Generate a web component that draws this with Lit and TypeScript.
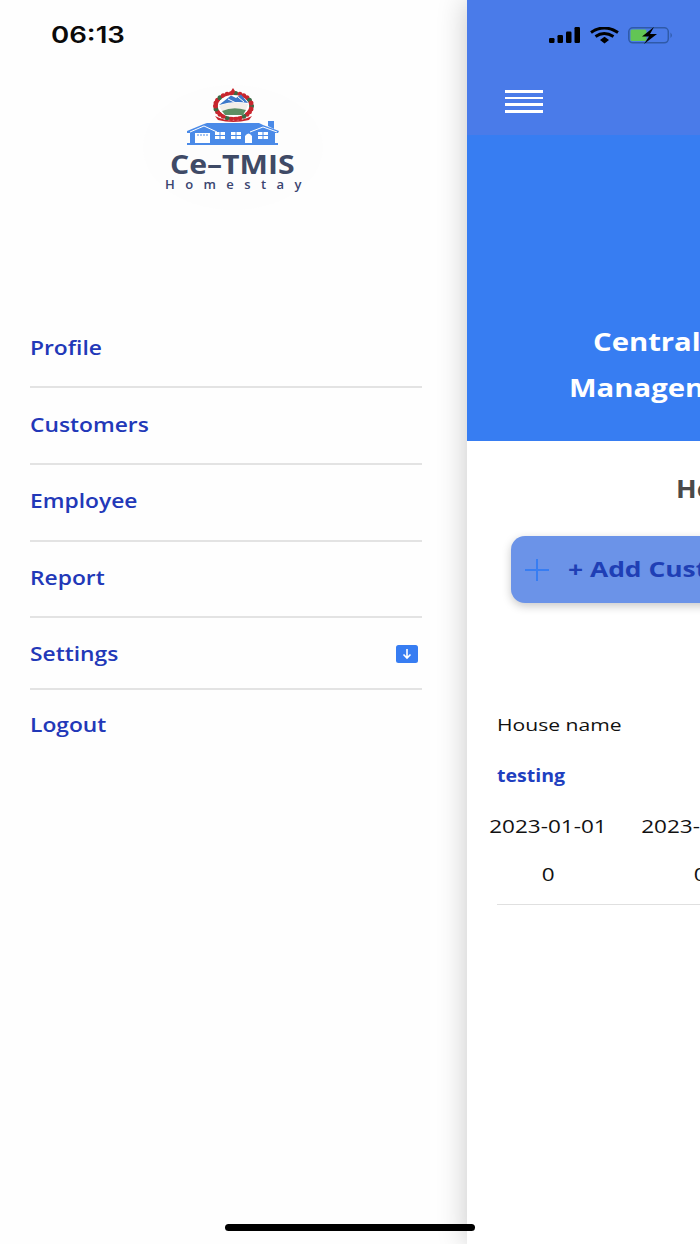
import { LitElement, html, css, svg } from "lit";
import { customElement } from "lit/decorators.js";

const dots = Array.from({ length: 26 }, (_, i) => {
  const a = (i / 26) * Math.PI * 2;
  return svg`<circle cx=${233.5 + Math.cos(a) * 18} cy=${106 + Math.sin(a) * 12.5} r="2.5" fill=${i % 4 === 0 ? "#3c6b45" : "#c8262e"} />`;
});

@customElement("app-root")
export class AppRoot extends LitElement {
  static styles = css`
    :host {
      display: block;
      position: relative;
      width: 700px;
      height: 1244px;
      overflow: hidden;
      font-family: "Open Sans", "Noto Sans", sans-serif;
      background: #fff;
    }
    .page { display: flex; height: 1244px; }
    .s { display: inline-block; transform-origin: left center; transform: scaleX(1.2); white-space: nowrap; }

    .drawer { width: 467px; flex: none; background: #fefefe; display: flex; flex-direction: column; }
    .time { height: 70px; padding-left: 50.5px; font: 600 23px/71px Inter, sans-serif; color: #0a0a0a; }
    .time .s { transform: scaleX(1.2); }
    .logo { align-self: flex-start; margin-left: 143px; margin-top: 15px; width: 180px; height: 125px; border-radius: 50%;
      background: #fdfdfd; display: flex; flex-direction: column; align-items: center; }
    .logo svg { display: block; width: 180px; height: 65px; flex: none; }
    .ce { font-weight: 700; font-size: 26px; line-height: 24px; color: #3f4a66; margin-top: 2px; width: 124px; margin-left: -2px; }
    .ce .s { transform: scaleX(1.16); }
    .home { font-weight: 600; font-size: 13px; line-height: 14px; color: #3a4570; letter-spacing: 10.4px; width: 136px; margin-top: 1px; white-space: nowrap; }

    .menu { margin-top: 101.5px; padding: 0 45px 0 30px; display: flex; flex-direction: column; }
    .row { height: 72.7px; padding-bottom: 2px; display: flex; align-items: center; justify-content: space-between; border-bottom: 2px solid #e3e3e3; color: #2238b8; font-size: 19px; font-weight: 600; }
    .row.settings { height: 69px; padding: 1px 0 0; }
    .row.last { border-bottom: none; height: 69px; }
    .row .s { transform: scaleX(1.2); }
    .arrow { width: 22px; height: 18px; margin-right: 4px; background: #377df2; border-radius: 2.5px; display: flex; align-items: center; justify-content: center; }
    .arrow svg { display: block; width: 12px; height: 12px; }

    .main { flex: 1; min-width: 0; background: #fff; overflow: hidden; display: flex; flex-direction: column; box-shadow: 0 0 28px rgba(0, 0, 0, 0.22); white-space: nowrap; }
    .top { height: 135px; flex: none; background: #4a7be9; position: relative; display: flex; flex-direction: column; }
    .status { display: flex; align-items: flex-start; padding: 27px 0 0 82px; height: 43px; box-sizing: border-box; }
    .status svg { display: block; }
    .burger { margin: 47px 0 0 38px; width: 38px; display: flex; flex-direction: column; gap: 4.2px; }
    .burger i { display: block; height: 2.5px; background: #fff; }

    .hero { height: 306px; flex: none; background: #377df2; color: #fff; font-weight: 700; font-size: 25px; line-height: 46px; box-sizing: border-box; padding-top: 183px; display: flex; flex-direction: column; }
    .hero .a { margin-left: 126px; }
    .hero .b { margin-left: 102px; }
    .hero .s { transform: scaleX(1.17); }

    .sub { margin: 30px 0 0 209px; font-weight: 700; font-size: 25px; line-height: 34px; color: #4a4a4a; height: 34px; }
    .sub .s { transform: scaleX(1.08); }
    .add { margin: 31px 0 0 44px; width: 400px; height: 67px; box-sizing: border-box; padding-bottom: 3px; flex: none; border-radius: 14px; background: #6b93e8; box-shadow: 0 3px 10px rgba(0, 0, 0, 0.22); display: flex; align-items: center; color: #1f3fb5; font-weight: 700; font-size: 22px; }
    .add svg { display: block; margin: 3px 19px 0 14px; flex: none; }
    .add .s { transform: scaleX(1.2); }

    .table { margin-top: 110px; display: flex; flex-direction: column; }
    .label { margin-left: 30px; font-size: 17px; line-height: 24px; color: #111; }
    .label .s { transform: scaleX(1.24); }
    .name { margin: 27px 0 0 30px; font-size: 17px; line-height: 24px; font-weight: 700; color: #1f3fc0; }
    .name .s { transform: scaleX(1.15); }
    .grid { display: grid; grid-template-columns: repeat(2, 152px); margin-left: 5px; color: #111; font-size: 18px; width: 304px; }
    .grid > div { display: flex; justify-content: center; }
    .g1 { margin-top: 25px; line-height: 26px; }
    .g2 { margin-top: 22px; line-height: 26px; }
    .line { margin: 17px 0 0 30px; height: 1px; background: #e0e0e0; width: 300px; }
    .grid .c { display: inline-block; transform: scaleX(1.25); white-space: nowrap; }

    .indicator { position: absolute; left: 225px; top: 1224px; width: 250px; height: 7px; background: #000; border-radius: 4px; }
  `;

  private logoArt() {
    return html`<svg viewBox="143 85 180 65" aria-hidden="true">
      ${dots}
      <ellipse cx="233.500" cy="106" rx="15.500" ry="11" fill="#fff" />
      <path d="M219 105 L231 95.500 L236 98 L241 94.500 L248 103 Q234 100 219 105 Z" fill="#3d78c9" />
      <path d="M228 99 L236 103 M238 97 L244 102" stroke="#fff" stroke-width="1" />
      <path d="M219 106 Q233 100 248 104 L246 110 Q233 106 222 111 Z" fill="#f2eee8" />
      <path d="M222 111 Q233 106 246 110 L243 115 L225 115 Z" fill="#5d8f63" />
      <path d="M215 116 Q233 125 252 116 L249 120 Q233 124 218 120 Z" fill="#c8262e" />
      <path d="M231 91 L233 88 L235 91 L234 94 L232 94 Z" fill="#c8262e" />

      <path d="M268 121 H274 V129 L268 126 Z" fill="#4a8ae8" />
      <path d="M187 131 L204 124 L207 123 H259 L263 125 L279 131 L278 133 H275 V143 H278 V145 H187 V143 H190 V133 H187 Z" fill="#4a8ae8" />
      <path d="M190 132 L204 126 L217 132" fill="none" stroke="#fff" stroke-width="1" />
      <path d="M250 132 L263 127 L277 132" fill="none" stroke="#fff" stroke-width="1" />
      <rect x="195" y="133" width="15" height="10" fill="#fff" />
      <path d="M197 135 H208" stroke="#4a8ae8" stroke-width="1" stroke-dasharray="2 1" />
      <path d="M215 132 H225 V139 H215 Z M231 132 H241 V139 H231 Z M258 132 H268 V139 H258 Z" fill="#fff" />
      <path d="M220 132 V139 M215 135.500 H225 M236 132 V139 M231 135.500 H241 M263 132 V139 M258 135.500 H268" stroke="#4a8ae8" stroke-width="1" />
      <path d="M245 143 V136 Q248.500 131 252 136 V143 Z" fill="#fff" />
    </svg>`;
  }

  render() {
    const items = ["Profile", "Customers", "Employee", "Report"];
    return html`
      <div class="page">
        <aside class="drawer">
          <div class="time"><span class="s">06:13</span></div>
          <div class="logo">
            ${this.logoArt()}
            <div class="ce"><span class="s">Ce–TMIS</span></div>
            <div class="home">Homestay</div>
          </div>
          <nav class="menu">
            ${items.map((t) => html`<div class="row"><span class="s">${t}</span></div>`)}
            <div class="row settings">
              <span class="s">Settings</span>
              <span class="arrow"><svg viewBox="0 0 12 12"><path d="M6 1 V10 M2.500 6.500 L6 10 L9.500 6.500" fill="none" stroke="#fff" stroke-width="1.6" /></svg></span>
            </div>
            <div class="row last"><span class="s">Logout</span></div>
          </nav>
        </aside>
        <main class="main">
          <div class="top">
            <div class="status">
              <svg width="125" height="17" viewBox="0 0 125 17" aria-hidden="true">
                <rect x="0" y="11" width="5.500" height="5" rx="1.200" fill="#000" />
                <rect x="8.500" y="8" width="5.500" height="8" rx="1.200" fill="#000" />
                <rect x="17" y="4.500" width="5.500" height="11.500" rx="1.200" fill="#000" />
                <rect x="25.500" y="0" width="5.500" height="16" rx="1.200" fill="#000" />
                <path d="M42 5.500 Q55 -3.500 69 5.500" fill="none" stroke="#000" stroke-width="3" />
                <path d="M46.500 9.500 Q55 3.500 64.500 9.500" fill="none" stroke="#000" stroke-width="3" />
                <path d="M51 13 L55.500 9.800 L60 13 L55.500 16.500 Z" fill="#000" />
                <rect x="79.800" y="0.800" width="39.500" height="15" rx="4" fill="none" stroke="#2f5aa8" stroke-width="1.500" />
                <rect x="81.500" y="2.500" width="16" height="11.500" rx="1.500" fill="#62c554" />
                <path d="M121.500 5.500 Q124.300 8.300 121.500 11 Z" fill="#2f5aa8" />
                <path d="M105 0 L93 9.500 H100 L95 17 L108 7 H101 Z" fill="#000" />
              </svg>
            </div>
            <div class="burger"><i></i><i></i><i></i><i></i></div>
          </div>
          <div class="hero">
            <div class="a"><span class="s">Central</span></div>
            <div class="b"><span class="s">Managen</span></div>
          </div>
          <div class="sub"><span class="s">He</span></div>
          <div class="add">
            <svg width="24" height="22" viewBox="0 0 24 22"><path d="M12 0 V22 M0 11 H24" stroke="#377df2" stroke-width="2" /></svg>
            <span class="s">+ Add Cust</span>
          </div>
          <div class="table">
            <div class="label"><span class="s">House name</span></div>
            <div class="name"><span class="s">testing</span></div>
            <div class="grid g1"><div><span class="c">2023-01-01</span></div><div><span class="c">2023-01-01</span></div></div>
            <div class="grid g2"><div><span class="c">0</span></div><div><span class="c">0</span></div></div>
            <div class="line"></div>
          </div>
        </main>
      </div>
      <div class="indicator"></div>
    `;
  }
}
